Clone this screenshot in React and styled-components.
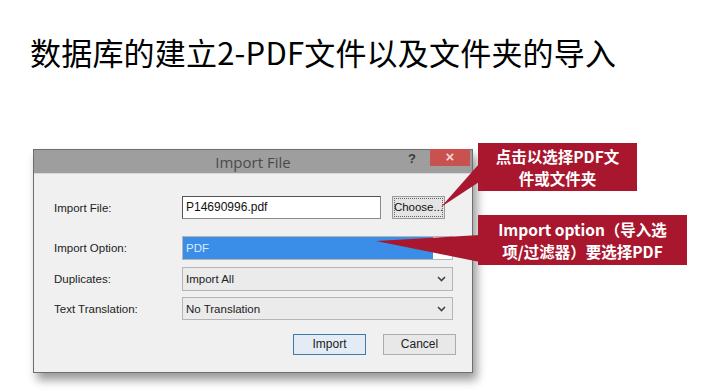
import React from "react";
import styled, { createGlobalStyle } from "styled-components";

const GlobalStyle = createGlobalStyle`
  html, body {
    margin: 0;
    padding: 0;
    background: #ffffff;
  }
`;

const rows = [
  { label: "Import Option:", value: "PDF", highlight: true, height: 24, gap: 17 },
  { label: "Duplicates:", value: "Import All", height: 24, gap: 7 },
  { label: "Text Translation:", value: "No Translation", height: 23, gap: 6 },
];

// Component
const App = () => {
  return (
    <Page>
      <GlobalStyle />
      <Title>数据库的建立2-PDF文件以及文件夹的导入</Title>
      <Dialog>
        <TitleBar>
          <DialogTitle>Import File</DialogTitle>
          <Help>?</Help>
          <CloseBtn>×</CloseBtn>
        </TitleBar>
        <Body>
          <Row height={23} gap={0}>
            <Label>Import File:</Label>
            <FileInput>P14690996.pdf</FileInput>
            <ChooseBtn>Choose...</ChooseBtn>
          </Row>
          {rows.map((row) => (
            <Row key={row.label} height={row.height} gap={row.gap}>
              <Label>{row.label}</Label>
              <Combo highlight={row.highlight}>
                <ComboValue highlight={row.highlight}>{row.value}</ComboValue>
                {!row.highlight && (
                  <svg width="9" height="6" viewBox="0 0 9 6">
                    <path
                      d="M1 1 L4.5 4.5 L8 1"
                      fill="none"
                      stroke="#444"
                      strokeWidth="1.6"
                    />
                  </svg>
                )}
              </Combo>
            </Row>
          ))}
          <Buttons>
            <DialogBtn primary>Import</DialogBtn>
            <DialogBtn>Cancel</DialogBtn>
          </Buttons>
        </Body>
      </Dialog>

      <Pointers width="720" height="391" viewBox="0 0 720 391">
        <polygon points="479,164 479,182 441,207" fill="#a8172d" />
        <polygon points="376,241 480,235 480,262" fill="#a8172d" />
      </Pointers>

      <Callout top={143} left={478} width={159} height={48}>
        点击以选择PDF文
        <br />
        件或文件夹
      </Callout>
      <Callout top={215} left={478} width={209} height={50}>
        Import option（导入选
        <br />
        项/过滤器）要选择PDF
      </Callout>
    </Page>
  );
};

// Styles
const Page = styled.div`
  position: relative;
  width: 720px;
  height: 391px;
  overflow: hidden;
  padding-top: 34px;
  box-sizing: border-box;
`;

const Title = styled.h1`
  margin: 0 0 0 30px;
  font-family: "Noto Sans CJK SC", "Noto Sans", sans-serif;
  font-weight: 400;
  font-size: 31px;
  line-height: 36px;
  color: #000;
  letter-spacing: 0.2px;
`;

const Dialog = styled.div`
  margin: 79px 0 0 33px;
  width: 438px;
  border: 1px solid #6e6e6e;
  background: #f0f0f0;
  box-shadow: 4px 7px 9px rgba(0, 0, 0, 0.4);
  font-family: "Liberation Sans", "DejaVu Sans", sans-serif;
`;

const TitleBar = styled.div`
  position: relative;
  height: 23px;
  background: #9e9e9e;
  display: flex;
  align-items: center;
  justify-content: center;
`;

const DialogTitle = styled.div`
  font-family: "Open Sans", "Liberation Sans", sans-serif;
  font-size: 15px;
  color: #4a4a4a;
`;

const Help = styled.div`
  position: absolute;
  right: 56px;
  top: 1px;
  font-size: 13px;
  font-weight: 700;
  color: #3a3a3a;
`;

const CloseBtn = styled.div`
  position: absolute;
  right: 2px;
  top: -1px;
  width: 40px;
  height: 17px;
  background: #c9514f;
  color: #f3d3d0;
  font-size: 15px;
  font-weight: 700;
  line-height: 16px;
  text-align: center;
`;

const Body = styled.div`
  padding: 22px 16px 17px 20px;
  border-top: 1px solid #d8d8d8;
`;

const Row = styled.div`
  display: flex;
  align-items: center;
  height: ${(p) => p.height}px;
  margin-top: ${(p) => p.gap}px;
`;

const Label = styled.div`
  width: 128px;
  font-size: 11.5px;
  color: #222;
`;

const FileInput = styled.div`
  width: 194px;
  height: 21px;
  background: #fff;
  border: 1px solid #8a8a8a;
  border-top-color: #555;
  border-left-color: #555;
  font-size: 12px;
  line-height: 21px;
  padding-left: 3px;
  color: #111;
`;

const ChooseBtn = styled.div`
  margin-left: 11px;
  width: 51px;
  height: 21px;
  background: #e4e4e4;
  border: 1px solid #9a9a9a;
  outline: 1px dotted #666;
  outline-offset: -3px;
  font-size: 11.5px;
  line-height: 21px;
  text-align: center;
  color: #111;
`;

const Combo = styled.div`
  width: 263px;
  height: calc(100% - 2px);
  border: 1px solid #b5b5b5;
  background: ${(p) =>
    p.highlight ? "linear-gradient(90deg, #3a8ee8 0 250px, #fff 250px)" : "#ebebeb"};
  display: flex;
  align-items: center;
  justify-content: space-between;
  padding-right: 6px;
  box-sizing: content-box;
`;

const ComboValue = styled.div`
  font-size: 11.5px;
  padding-left: 3px;
  color: ${(p) => (p.highlight ? "#d9ecff" : "#222")};
`;

const Buttons = styled.div`
  display: flex;
  justify-content: flex-end;
  gap: 17px;
  margin-top: 14px;
  margin-right: 0;
`;

const DialogBtn = styled.div`
  width: 71px;
  height: 19px;
  border: 1px solid ${(p) => (p.primary ? "#3d7bad" : "#acacac")};
  background: ${(p) => (p.primary ? "#e3ecf4" : "#e8e8e8")};
  font-size: 12px;
  line-height: 19px;
  text-align: center;
  color: #222;
`;

const Pointers = styled.svg`
  position: absolute;
  left: 0;
  top: 0;
  pointer-events: none;
`;

const Callout = styled.div`
  position: absolute;
  top: ${(p) => p.top}px;
  left: ${(p) => p.left}px;
  width: ${(p) => p.width}px;
  height: ${(p) => p.height}px;
  background: #a8172d;
  color: #fff;
  font-family: "Noto Sans CJK SC", "Noto Sans", sans-serif;
  font-weight: 700;
  font-size: 15.5px;
  line-height: 22px;
  display: flex;
  align-items: center;
  justify-content: center;
  text-align: center;
`;

export default App;
